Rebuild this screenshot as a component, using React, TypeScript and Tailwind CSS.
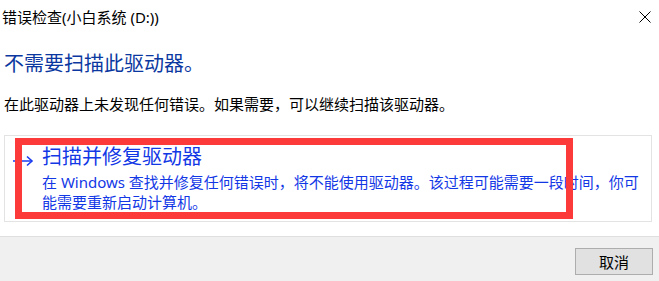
import React from "react";

const font = { fontFamily: '"Noto Sans", "Noto Sans CJK SC", sans-serif' };

export default function App() {
  return (
    <div
      className="w-[659px] h-[281px] bg-white flex flex-col overflow-hidden text-black"
      style={font}
    >
      {/* title bar */}
      <div className="h-[34px] flex items-center justify-between">
        <span className="pl-[2px] text-[15px] leading-[20px]">错误检查(小白系统 (D:))</span>
        <div className="w-[24px] h-[24px] flex items-center justify-center">
          <svg width="12" height="12" viewBox="0 0 12 12" className="mr-[4px]">
            <path d="M0.5 0.5 L11.5 11.5 M11.5 0.5 L0.5 11.5" stroke="#000" strokeWidth="1" fill="none" />
          </svg>
        </div>
      </div>

      {/* main instruction */}
      <div className="mt-[16px] pl-[4px] text-[20px] leading-[28px] text-[#0b38a0]">
        不需要扫描此驱动器。
      </div>

      {/* body */}
      <div className="mt-[16px] pl-[4px] text-[15px] leading-[20px] text-black">
        在此驱动器上未发现任何错误。如果需要，可以继续扫描该驱动器。
      </div>

      {/* command link box */}
      <div className="relative mt-[21px] ml-[4px] w-[648px] h-[87px] border border-[#e3e3e3] flex">
        <div className="w-[37px] flex justify-start pl-[7px] pt-[19px]">
          <svg width="22" height="12" viewBox="0 0 22 12">
            <path d="M1 6 H20" stroke="#1a3cf0" strokeWidth="1.5" fill="none" />
            <path d="M15 1.5 L20 6 L15 10.5" stroke="#1a3cf0" strokeWidth="1.6" fill="none" />
          </svg>
        </div>
        <div className="flex flex-col pt-[8px] text-[#1238e6]">
          <div className="text-[20px] leading-[26px]">扫描并修复驱动器</div>
          <div className="mt-[2px] text-[15px] leading-[20px] whitespace-nowrap">
            在 Windows 查找并修复任何错误时，将不能使用驱动器。该过程可能需要一段时间，你可
            <br />
            能需要重新启动计算机。
          </div>
        </div>
        {/* red annotation rectangle */}
        <div className="absolute left-[10px] top-[2px] w-[558px] h-[81px] border-[7px] border-[#fc3a3a] pointer-events-none" />
      </div>

      {/* footer */}
      <div className="mt-[14px] flex-1 border-t border-[#dfdfdf] bg-[#f0f0f0] flex justify-end items-start pt-[11px] pr-[6px]">
        <button className="w-[78px] h-[27px] border border-[#adadad] bg-[#e1e1e1] text-[15px] leading-[20px] text-black flex items-center justify-center">
          取消
        </button>
      </div>
    </div>
  );
}
